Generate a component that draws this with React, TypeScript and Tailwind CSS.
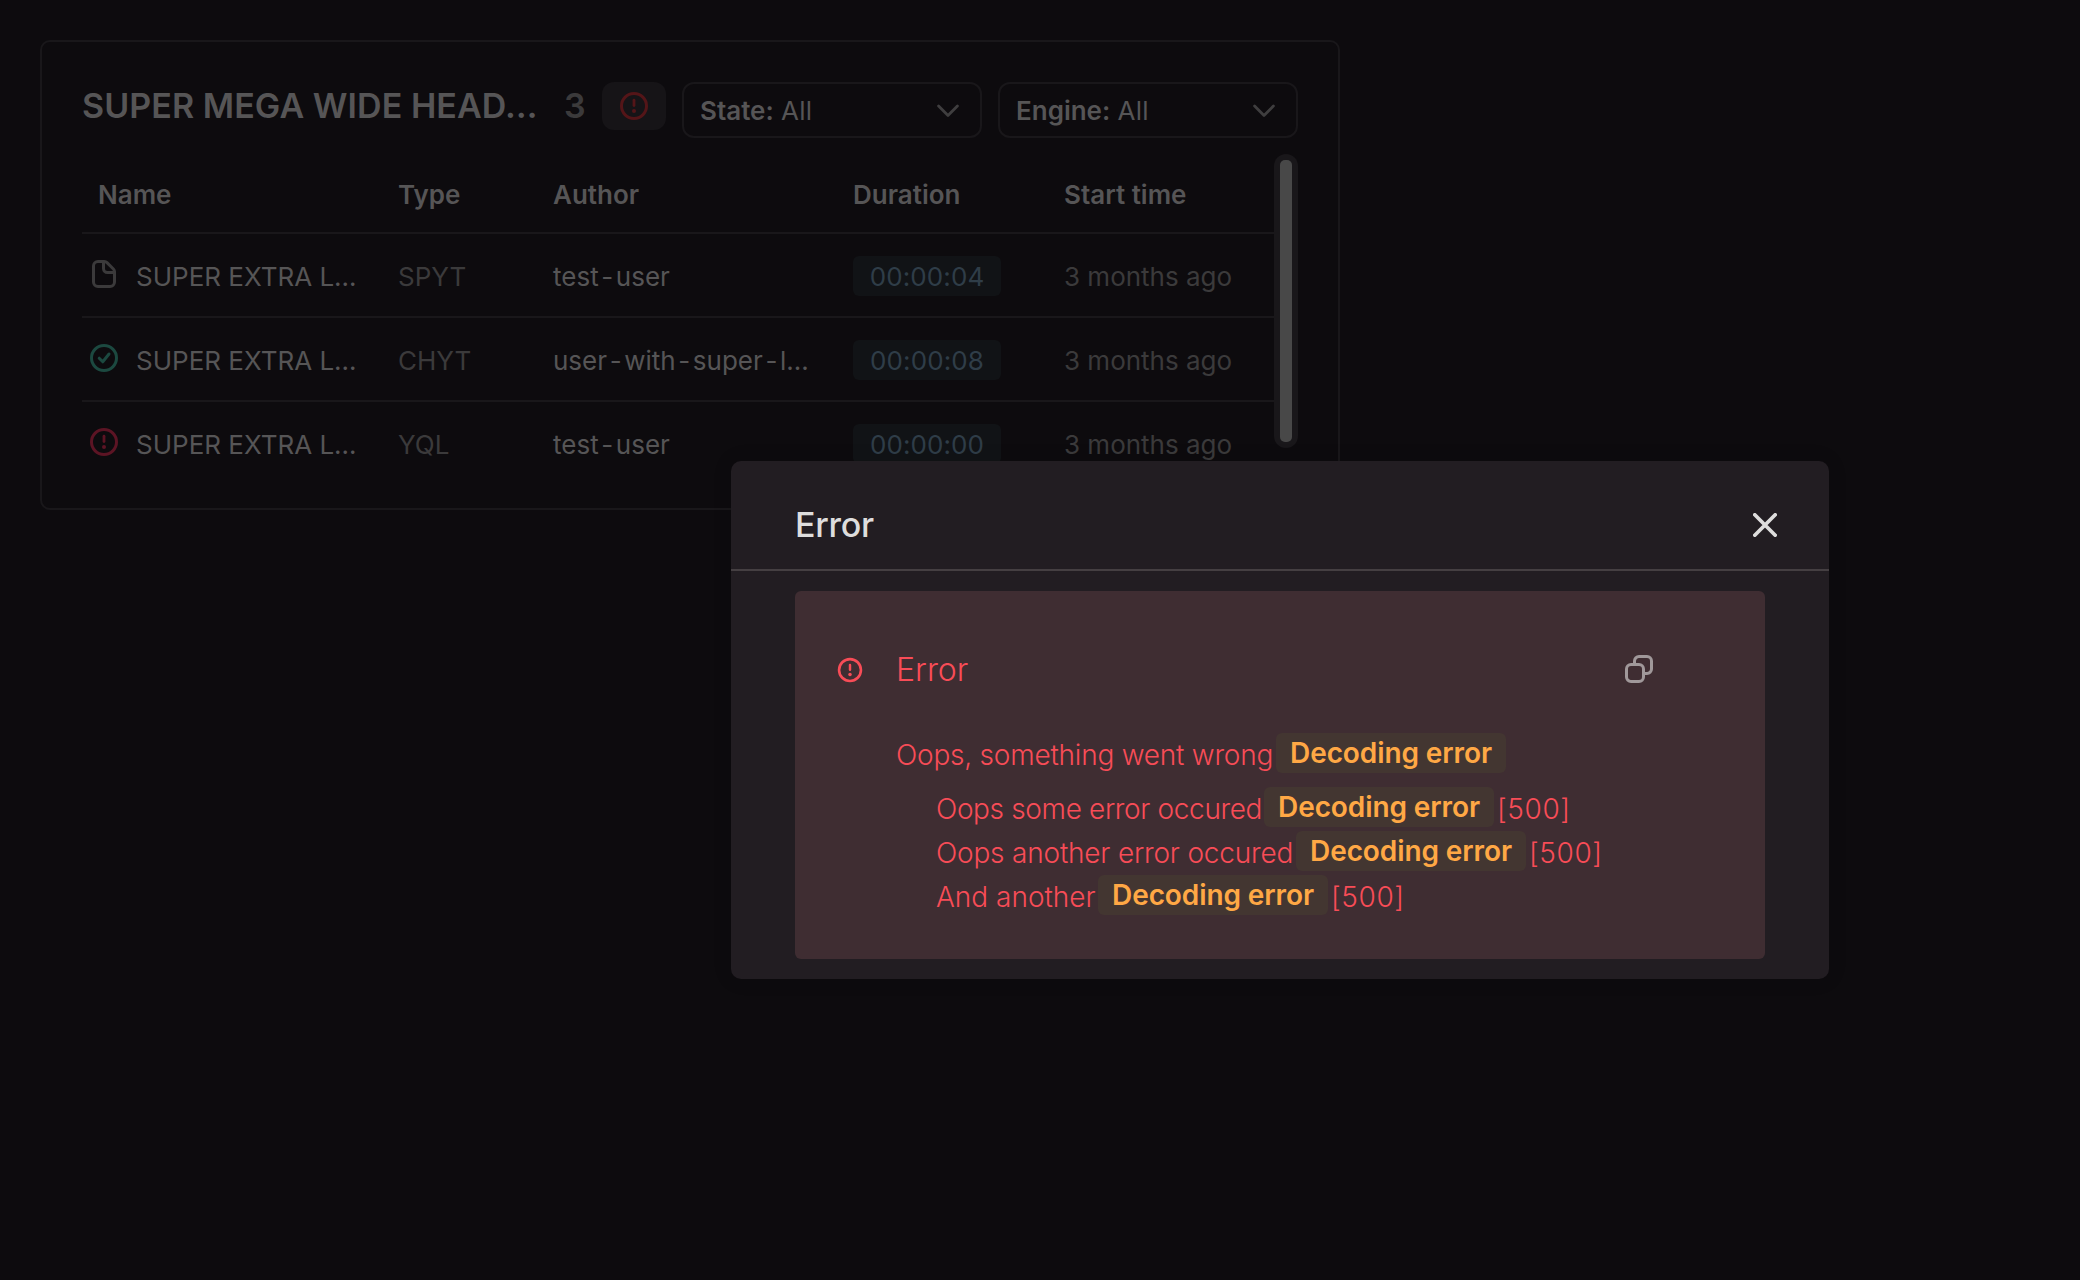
import React from 'react';

function AlertIcon({ className }: { className: string }) {
  return (
    <svg viewBox="0 0 16 16" fill="none" className={className}>
      <circle cx="8" cy="8" r="6.25" stroke="currentColor" strokeWidth="1.5" />
      <path d="M8 5.1v2.7" stroke="currentColor" strokeWidth="1.4" strokeLinecap="round" />
      <circle cx="8" cy="10.5" r="1" fill="currentColor" />
    </svg>
  );
}

function CheckIcon({ className }: { className: string }) {
  return (
    <svg viewBox="0 0 16 16" fill="none" className={className}>
      <circle cx="8" cy="8" r="6.25" stroke="currentColor" strokeWidth="1.5" />
      <path d="M5.6 8.1 7.4 9.9 10.5 6" stroke="currentColor" strokeWidth="1.5" strokeLinecap="round" strokeLinejoin="round" />
    </svg>
  );
}

function FileIcon({ className }: { className: string }) {
  return (
    <svg viewBox="0 0 16 16" fill="none" className={className}>
      <path
        d="M5 1.75h3.2c.5 0 .95.2 1.3.55l3.2 3.2c.35.35.55.8.55 1.3V12A2.25 2.25 0 0 1 11 14.25H5A2.25 2.25 0 0 1 2.75 12V4A2.25 2.25 0 0 1 5 1.75ZM7.75 2v3.25a2 2 0 0 0 2 2H13"
        stroke="currentColor"
        strokeWidth="1.5"
      />
    </svg>
  );
}

function CopyIcon({ className }: { className: string }) {
  return (
    <svg viewBox="0 0 16 16" fill="none" className={className}>
      <rect x="1.75" y="5.75" width="8.5" height="8.5" rx="2.25" stroke="currentColor" strokeWidth="1.5" />
      <path d="M5.75 6V4A2.25 2.25 0 0 1 8 1.75h4A2.25 2.25 0 0 1 14.25 4v4A2.25 2.25 0 0 1 12 10.25h-2" stroke="currentColor" strokeWidth="1.5" />
    </svg>
  );
}

function Select({ label }: { label: string }) {
  return (
    <div className="flex h-14 w-[300px] items-center justify-between rounded-xl border-2 border-[#19171a] pr-[21px] pl-4">
      <div className="pt-0.5 text-[26px] leading-[50px]">
        <span className="font-semibold">{label}:</span> <span className="tracking-[0.2px]">All</span>
      </div>
      <svg viewBox="0 0 22 14" fill="none" className="mt-0.5 h-[14px] w-[22px] text-[#3f3e3f]">
        <path d="M1.6 2 11 11.4 20.4 2" stroke="currentColor" strokeWidth="2.8" strokeLinecap="round" strokeLinejoin="round" />
      </svg>
    </div>
  );
}

function Author({ parts }: { parts: string[] }) {
  return (
    <span>
      {parts.map((part, i) => (
        <React.Fragment key={i}>
          {i > 0 && <span className="mx-[2.6px]">-</span>}
          {part}
        </React.Fragment>
      ))}
    </span>
  );
}

const rows = [
  { icon: <FileIcon className="size-8 text-[#3b3a3b]" />, type: 'SPYT', author: ['test', 'user'], duration: '00:00:04' },
  { icon: <CheckIcon className="size-8 text-[#1c4940]" />, type: 'CHYT', author: ['user', 'with', 'super', 'l…'], duration: '00:00:08' },
  { icon: <AlertIcon className="size-8 text-[#5c1424]" />, type: 'YQL', author: ['test', 'user'], duration: '00:00:00' },
];

const grid = 'grid grid-cols-[316px_155px_300px_211px_1fr]';

function Tag() {
  return (
    <span className="flex h-10 w-[230px] shrink-0 items-center justify-center rounded-md bg-[#433631] text-[28px] leading-10 font-semibold tracking-[-0.1px] text-[#ffa845]">
      Decoding error
    </span>
  );
}

const inner = [
  { text: 'Oops some error occured', width: 'w-[328px] tracking-[-0.36px]' },
  { text: 'Oops another error occured', width: 'w-[360px] tracking-[-0.2px]' },
  { text: 'And another', width: 'w-[162px]' },
];

export default function App() {
  return (
    <div className="relative h-[1280px] w-[2080px] overflow-hidden bg-[#0d0b0e] p-10 font-['Inter',sans-serif] text-[#565556]">
      <section className="h-[470px] w-[1300px] rounded-[10px] border-2 border-[#19171a] px-10 pt-10">
        <header className="flex h-[72px] items-start">
          <h1 className="w-[460px] text-[34px] leading-12 font-semibold tracking-[0.06px]">SUPER MEGA WIDE HEAD…</h1>
          <span className="w-[60px] pl-[22px] text-[34px] leading-12 font-semibold text-[#3b3a3b]">3</span>
          <button className="mr-4 flex h-12 w-16 items-center justify-center rounded-xl bg-[#161417]">
            <AlertIcon className="size-8 text-[#541518]" />
          </button>
          <div className="flex gap-4">
            <Select label="State" />
            <Select label="Engine" />
          </div>
        </header>
        <div className="flex">
          <div className="w-[1192px] text-[26px]">
            <div className={`${grid} h-20 border-b-2 border-[#19171a] pt-[2px] leading-[78px] font-semibold`}>
              <span className="pl-4">Name</span>
              <span>Type</span>
              <span>Author</span>
              <span>Duration</span>
              <span>Start time</span>
            </div>
            {rows.map((r, i) => (
              <div key={i} className={`${grid} h-[84px] pt-[2px] leading-[82px] ${i < 2 ? 'border-b-2 border-[#19171a]' : ''}`}>
                <span className="flex pl-1.5">
                  <span className="mt-[22px] mr-4">{r.icon}</span>SUPER EXTRA L…
                </span>
                <span className="text-[#3b3a3b]">{r.type}</span>
                <Author parts={r.author} />
                <span>
                  <span className="mt-5 flex h-10 w-[148px] items-center justify-center rounded-md bg-[#111316] pt-0.5 leading-[38px] tracking-[0.1px] text-[#2f3d48]">
                    {r.duration}
                  </span>
                </span>
                <span className="text-[#3b3a3b]">3 months ago</span>
              </div>
            ))}
          </div>
          <div className="h-[294px] w-6 rounded-full bg-[#19171a] p-1.5">
            <div className="h-full rounded-[5px] bg-[#484848]" />
          </div>
        </div>
      </section>

      <div className="absolute top-[461px] left-[731px] h-[518px] w-[1098px] rounded-[10px] bg-[#221d22] shadow-[0_0_20px_rgba(0,0,0,0.1)]">
        <div className="flex h-[110px] items-center justify-between border-b-2 border-[#453f42] pt-5 pr-[52px] pl-16 text-[#dedddd]">
          <h2 className="text-[34px] leading-[50px] font-medium tracking-[-0.3px]">Error</h2>
          <svg viewBox="0 0 24 24" fill="none" className="size-6">
            <path d="M1.8 1.8 22.2 22.2M22.2 1.8 1.8 22.2" stroke="currentColor" strokeWidth="3.7" strokeLinecap="round" />
          </svg>
        </div>
        <div className="mx-16 mt-5 h-[368px] rounded-md bg-[#3f2d32] pt-[54px] text-[28px] leading-10 font-light text-[#f84c57]">
          <div className="flex h-[50px] items-center">
            <AlertIcon className="ml-[41px] size-7" />
            <span className="ml-8 w-[727px] text-[32px]">Error</span>
            <CopyIcon className="mb-0.5 size-8 text-[#a0989a]" />
          </div>
          <div className="mt-[38px] ml-[101px] flex">
            <span className="w-[380px] pt-0.5 tracking-[-0.22px] whitespace-nowrap">Oops, something went wrong</span>
            <Tag />
          </div>
          <div className="mt-3 ml-[141px] flex flex-col">
            {inner.map((e) => (
              <div key={e.text} className="flex h-11">
                <span className={`${e.width} shrink-0 pt-0.5 whitespace-nowrap`}>{e.text}</span>
                <Tag />
                <span className="pt-0.5 pl-[3px] tracking-[0.6px]">[500]</span>
              </div>
            ))}
          </div>
        </div>
      </div>
    </div>
  );
}
